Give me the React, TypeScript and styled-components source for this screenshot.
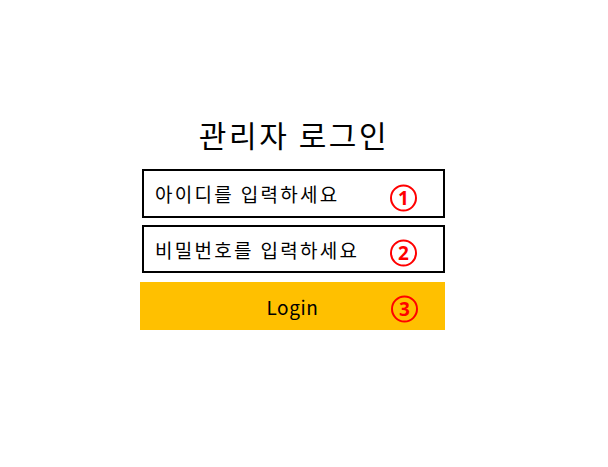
import React from 'react';
import styled, {createGlobalStyle} from 'styled-components';

const GlobalStyle = createGlobalStyle`
  body {
    margin: 0;
    background: #fff;
    font-family: "Noto Sans CJK KR", "Noto Sans", sans-serif;
  }
`;

const Page = styled.div`
  width: 608px;
  height: 467px;
  padding: 112px 0 0 140px;
  box-sizing: border-box;
`;

const Form = styled.form`
  width: 305px;
  display: flex;
  flex-direction: column;
  align-items: center;
`;

const Title = styled.h1`
  margin: 0 0 12px 0;
  height: 45px;
  font-size: 30px;
  font-weight: 400;
  line-height: 45px;
  color: #000;
  letter-spacing: 2.6px;
  padding-left: 3px;
`;

const Field = styled.div<{ $top?: number }>`
  position: relative;
  align-self: stretch;
  margin: ${(p) => p.$top ?? 0}px 0 0 2px;
`;

const Input = styled.input<{ $h?: number }>`
  display: block;
  width: 100%;
  height: ${(p) => p.$h ?? 48}px;
  box-sizing: border-box;
  border: 2px solid #000;
  padding: 0 0 0 11px;
  font-family: inherit;
  font-size: 19px;
  letter-spacing: 2.3px;
  color: #000;
  outline: none;
  background: #fff;

  &::placeholder {
    color: #000;
  }
`;

const Button = styled.button`
  display: block;
  width: 100%;
  height: 48px;
  border: none;
  background: #ffc000;
  font-family: inherit;
  font-size: 19px;
  letter-spacing: 0.6px;
  color: #000;
  cursor: pointer;
`;

const Badge = styled.span<{ $dy?: number }>`
  position: absolute;
  left: 248px;
  top: 50%;
  transform: translateY(calc(-50% + ${(p) => p.$dy ?? 0}px));
  width: 27px;
  height: 27px;
  box-sizing: border-box;
  border: 2px solid #ff0000;
  border-radius: 50%;
  display: flex;
  align-items: center;
  justify-content: center;
  color: #ff0000;
  font-family: "Noto Sans", sans-serif;
  font-weight: 700;
  font-size: 19px;
  line-height: 1;
  pointer-events: none;
`;

const App = () => {
    return (
        <>
            <GlobalStyle />
            <Page>
                <Form onSubmit={(e) => e.preventDefault()}>
                    <Title>관리자 로그인</Title>
                    <Field>
                        <Input $h={49} type="text" placeholder="아이디를 입력하세요" />
                        <Badge $dy={4}>1</Badge>
                    </Field>
                    <Field $top={7}>
                        <Input type="password" placeholder="비밀번호를 입력하세요" />
                        <Badge $dy={4}>2</Badge>
                    </Field>
                    <Field $top={9} style={{ marginLeft: 0 }}>
                        <Button type="submit">Login</Button>
                        <Badge $dy={3} style={{ left: 251 }}>3</Badge>
                    </Field>
                </Form>
            </Page>
        </>
    );
};

export default App;
